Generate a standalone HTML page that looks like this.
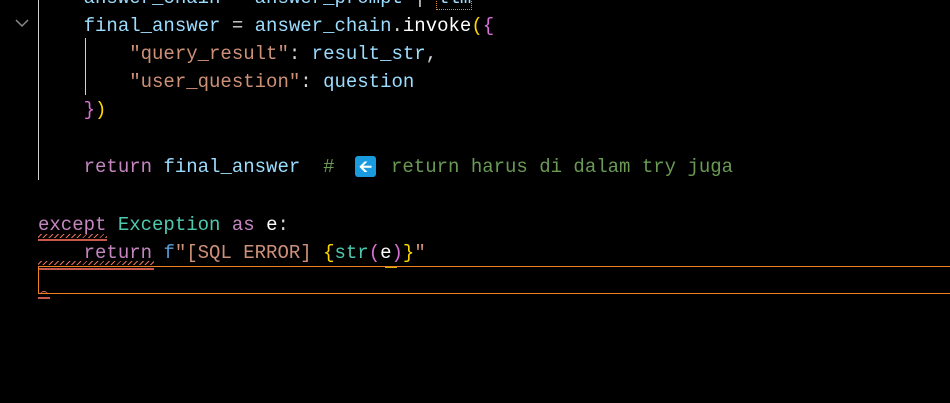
<!DOCTYPE html>
<html><head><meta charset="utf-8"><style>
html,body{margin:0;padding:0;background:#000;width:950px;height:403px;overflow:hidden}
body{position:relative;font-family:"Liberation Mono",monospace;font-size:19px;color:#d4d4d4}
.l{position:absolute;left:38px;white-space:pre;height:28px;line-height:28px}
.k{color:#c586c0}.v{color:#9cdcfe}.s{color:#ce9178}.c{color:#6a9955}.t{color:#4ec9b0}.f{color:#dcdcaa}.b{color:#569cd6}
.y{color:#ffd700}.p{color:#da70d6}.w{color:#fff}
.g{position:absolute;background:#d0d0d0;width:1px}
.sq{position:absolute;height:4px;background:repeating-linear-gradient(135deg,transparent 0 2px,#e0735a 2px 3px,transparent 3px 4px);}
.ul{position:absolute;height:2px;background:#c8584a}
</style></head><body>
<div class="g" style="left:38px;top:0;height:180px"></div>
<div class="g" style="left:85px;top:38px;height:57px"></div>
<svg style="position:absolute;left:14px;top:17px" width="16" height="12"><path d="M2 3 L8 9 L14 3" stroke="#8a8a8a" stroke-width="1.5" fill="none"/></svg>
<div class="l" style="top:-16px"><span class="v">    answer_chain</span> = <span class="v">answer_prompt</span> | <span class="v" style="outline:1px dotted #e08a30">llm</span></div>
<div class="l" style="top:12px">    <span class="v">final_answer</span> = <span class="v">answer_chain</span>.<span class="w">invoke</span><span class="y">(</span><span class="p">{</span></div>
<div class="l" style="top:40px">        <span class="s">"query_result"</span>: <span class="v">result_str</span>,</div>
<div class="l" style="top:68px">        <span class="s">"user_question"</span>: <span class="v">question</span></div>
<div class="l" style="top:96px">    <span class="p">}</span><span class="y">)</span></div>
<div class="l" style="top:153px">    <span class="k">return</span> <span class="v">final_answer</span>  <span class="c">#</span></div>
<div style="position:absolute;left:355px;top:156px;width:21px;height:21px;background:#1a9be0;border-radius:3px;color:#fff;font:bold 16px 'DejaVu Sans',sans-serif;line-height:21px;text-align:center">&#129128;</div>
<div class="l c" style="top:153px;left:391px">return harus di dalam try juga</div>
<div class="l" style="top:211px"><span class="k">except</span> <span class="t">Exception</span> <span class="k">as</span> <span class="w">e</span>:</div>
<div class="sq" style="left:38px;top:234px;width:69px"></div>
<div class="ul" style="left:38px;top:239px;width:69px"></div>
<div class="l" style="top:239px">    <span class="k">return</span> <span class="b">f</span><span class="s">"[SQL ERROR] </span><span class="y">{</span><span class="t">str</span><span class="p">(</span><span class="w">e</span><span class="p">)</span><span class="y">}</span><span class="s">"</span></div>
<div class="sq" style="left:38px;top:261px;width:116px"></div>
<div class="ul" style="left:38px;top:268px;width:116px"></div>
<div style="position:absolute;left:385px;top:266px;width:12px;height:2px;background:#d4b000"></div>
<div style="position:absolute;left:38px;top:266px;width:912px;height:28px;border-top:1px solid #f08020;border-bottom:1px solid #f08020;border-left:1px solid #f08020;box-sizing:border-box"></div>
<div class="ul" style="left:38px;top:297px;width:12px"></div>
<div style="position:absolute;left:40px;top:291px;width:8px;height:4px;border-top:1px solid #e0735a;border-radius:4px 4px 0 0"></div>
</body></html>
